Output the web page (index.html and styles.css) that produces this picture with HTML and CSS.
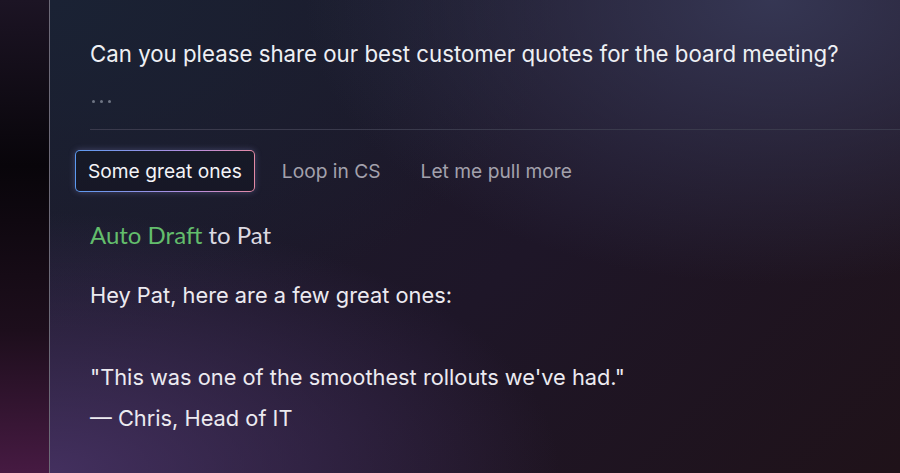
FILE: index.html
```html
<!DOCTYPE html>
<html lang="en">
<head>
    <meta charset="UTF-8">
    <title>Auto Draft</title>
    <link rel="stylesheet" href="styles.css">
</head>
<body>
    <aside class="rail"></aside>

    <main class="panel">
        <p class="question">Can you please share our best customer quotes for the board meeting?</p>
        <div class="dots"><span></span><span></span><span></span></div>
        <hr class="divider">

        <div class="chips">
            <button class="chip active">Some great ones</button>
            <button class="chip">Loop in CS</button>
            <button class="chip">Let me pull more</button>
        </div>

        <p class="draft-title"><span class="auto">Auto Draft</span> to Pat</p>

        <div class="draft-body">
            <p>Hey Pat, here are a few great ones:</p>
            <p class="quote">"This was one of the smoothest rollouts we've had."<br>— Chris, Head of IT</p>
        </div>
    </main>
</body>
</html>
```

FILE: styles.css
```css
html, body {
    margin: 0;
    padding: 0;
    height: 100%;
    overflow: hidden;
}

body {
    display: flex;
    background: #0b0709;
    font-family: Inter, "Open Sans", sans-serif;
    color: #eceaf0;
}

.rail {
    width: 49px;
    flex-shrink: 0;
    border-right: 1px solid #6c6a78;
    background: linear-gradient(180deg, #1c1424 0%, #08050a 35%, #1d0e1c 70%, #461a42 100%);
}

.panel {
    flex: 1;
    padding: 39px 0 0 40px;
    background:
        radial-gradient(60% 55% at 0% 100%, rgba(74, 52, 104, 0.85) 0%, rgba(74, 52, 104, 0) 100%),
        radial-gradient(55% 60% at 85% 0%, rgba(56, 58, 88, 0.9) 0%, rgba(56, 58, 88, 0) 100%),
        radial-gradient(60% 70% at 0% 0%, #1a2234 0%, rgba(26, 34, 52, 0) 100%),
        linear-gradient(135deg, #1b1c2c 0%, #1e1628 55%, #1f1219 100%);
}

p {
    margin: 0;
}

.question {
    font-size: 22.25px;
    line-height: 30px;
    color: #eef0f4;
}

.dots {
    display: flex;
    gap: 5px;
    margin: 31px 0 0 2px;
}

.dots span {
    width: 3px;
    height: 3px;
    border-radius: 50%;
    background: #6f7584;
}

.divider {
    margin: 26px 0 0;
    border: 0;
    border-top: 1px solid #3a3a4c;
}

.chips {
    display: flex;
    align-items: center;
    gap: 14px;
    margin: 20px 0 0 -15px;
}

.chip {
    font-family: inherit;
    font-size: 19.2px;
    color: #a3a1ac;
    background: none;
    border: 0;
    padding: 0 13px;
    height: 42px;
    border-radius: 5px;
}

.chip.active {
    color: #f4f4f8;
    padding: 0 12px;
    border: 1.5px solid transparent;
    background:
        linear-gradient(#161a27, #171726) padding-box,
        linear-gradient(90deg, #5b9af0, #b78ee0 65%, #e48aa4) border-box;
    box-shadow: 0 0 6px rgba(150, 150, 220, 0.35);
}

.draft-title {
    margin-top: 28px;
    font-family: Lato, sans-serif;
    font-size: 24px;
    line-height: 30px;
    color: #dcdae2;
}

.auto {
    color: #63bd6c;
}

.draft-body {
    margin-top: 25px;
    font-size: 21.8px;
    line-height: 41px;
}

.quote {
    margin-top: 41px;
}
```
